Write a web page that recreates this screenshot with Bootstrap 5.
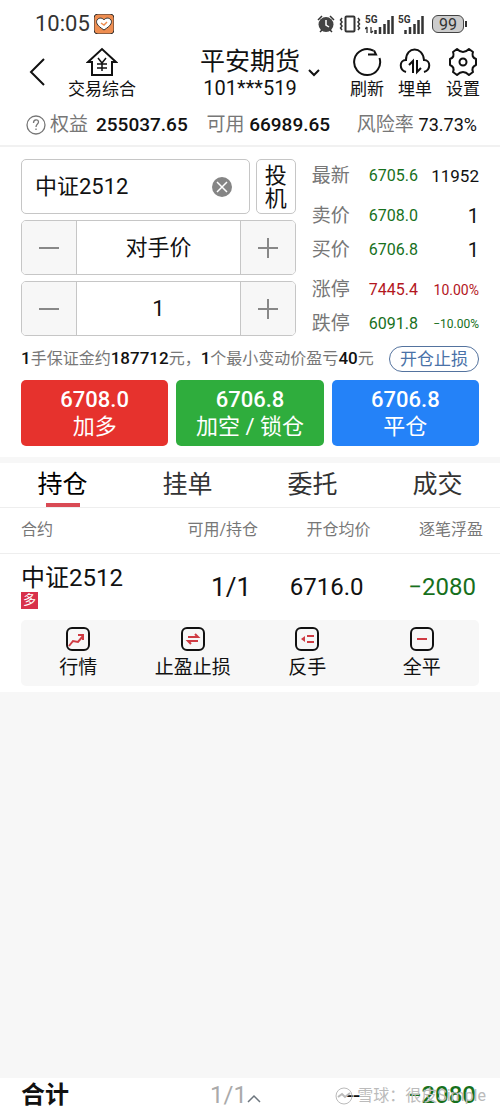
<!DOCTYPE html>
<html lang="zh-CN">
<head>
<meta charset="utf-8">
<meta name="viewport" content="width=device-width, initial-scale=1">
<title>交易综合</title>
<link rel="stylesheet" href="https://cdn.jsdelivr.net/npm/bootstrap@5.3.0/dist/css/bootstrap.min.css">
<style>
:root{--ink:#111;--muted-ink:#777;--up:#b3161d;--down:#17701c;--line:#c6c6c6;--soft:#f7f7f7}
body{font-family:Roboto,"Noto Sans CJK SC",sans-serif;color:var(--ink);background:var(--soft);font-size:16px;line-height:24px}
svg{display:block;flex:none;fill:none;stroke:currentColor}
button{color:inherit}
.gutter{padding-left:21px;padding-right:21px}
.tap{border:0;background:none;padding:0}
.statusbar{height:44px;padding:4px 32px 0 35px;color:#333}
.clock{font-size:22px}
.net{font-size:10px;line-height:10px;font-weight:700}
.batt{width:32px;height:18px;border:1px solid #444;border-radius:6px;background:#ccc;font-size:16px;line-height:17px;text-align:center}
.apphead{height:60px;padding:3px 20px 0 28px}
.tool{font-size:17px;line-height:20px;gap:2px}
.tools{gap:14px}
.home-btn{margin-left:22px}
.broker-btn{margin-left:34px}
.broker{font-size:25px;line-height:30px}
.acct-no{font-size:20px;line-height:22px}
.funds{height:43px;padding:0 23px 0 26px;font-size:19px;border-bottom:2px solid #f1f1f1}
.funds-val{font-weight:500}
.dim{color:var(--muted-ink)}
.risk{font-size:18px}
.ticket{padding-top:12px;gap:16px}
.fields{gap:6px;flex:0 0 60%;min-width:0}
.fields-top{gap:6px}
.box{height:55px;border:1px solid var(--line);border-radius:5px;overflow:hidden;background:#fff;font-size:22px}
.symbol-box{padding:0 17px 0 13px}
.box input{border:0;outline:0;min-width:0;background:none;color:inherit}
.step{width:54px;flex:none;background:var(--soft);color:#888}
.box .mid{border-left:1px solid var(--line);border-right:1px solid var(--line)}
.kind{width:40px;line-height:23px}
.quotes{font-size:16px;margin:0;table-layout:fixed}
.quotes th{width:57px;font-size:19px;font-weight:400;color:var(--muted-ink)}
.quotes th,.quotes td{padding:0;height:34px;white-space:nowrap}
.quotes td.num{width:52px}
.quotes .tall th,.quotes .tall td{padding-top:6px;height:40px}
.quotes .qty{font-size:20px}
.quotes .qty-s{font-size:17px}
.pct{font-size:14px}
.pct-s{font-size:12px}
.up{color:var(--up)}.down{color:var(--down)}
.note{height:39px;padding-bottom:4px}
.note b{color:var(--ink);font-size:17px;font-weight:500}
.pill{border:1px solid #54739e;border-radius:13px;height:26px;line-height:22px;font-size:17px;padding:0 10px;color:#4a72a8;background:#fff}
.orders{gap:8px;padding-bottom:11px}
.order{height:66px;border:0;border-radius:5px;color:#fff;font-size:22px;line-height:27px}
.order strong{display:block;font-size:22px;font-weight:500}
.buy{background:#e6322d}.sell{background:#2fad3d}.close-pos{background:#2482f8}
.band{height:6px;background:var(--soft)}
.tabs{height:45px;border-bottom:1px solid #eee}
.tabs a{font-size:25px;line-height:44px;color:#333;text-decoration:none;position:relative}
.tabs a.active::after{content:"";position:absolute;left:50%;bottom:0;width:34px;height:4px;margin-left:-17px;background:#d94a54}
.pos{table-layout:fixed;width:100%;margin:0}
.pos th{font-weight:400;color:var(--muted-ink);height:45px;padding:0 17px 0 0;border-bottom:1px solid #eee}
.pos td{font-size:24px;line-height:28px;height:67px;padding:0 24px 0 0}
.pos td.lots{font-size:26px}
.pos th:first-child,.pos td:first-child{padding:0 0 0 21px}
.side{display:block;width:17px;height:17px;background:#d8304a;color:#fff;font-size:13px;line-height:16px;text-align:center}
.actions-wrap{padding-bottom:6px}
.actions{background:var(--soft);border-radius:5px;height:66px}
.act{font-size:19px;line-height:26px;gap:3px}
.foot{height:33px;font-size:24px;line-height:34px;overflow:hidden}
.foot-name{width:42%}
.foot-lots{color:#aaa}
.foot-pl{padding-right:24px;font-weight:500}
.stamp{position:absolute;right:14px;top:6px;font-size:16px;line-height:24px;color:#bbb}
</style>
</head>
<body>
<div class="d-flex flex-column min-vh-100">
<div class="bg-white">
  <div class="statusbar d-flex align-items-center justify-content-between">
    <div class="d-flex align-items-center gap-1"><span class="clock">10:05</span>
      <svg width="20" height="20" viewBox="0 0 20 20" stroke="none"><rect width="20" height="20" rx="4" fill="#ee8d50"/><path d="M10 16C2 11 2 8 3 6c2-3 6-2 7 0 1-2 5-3 7 0 1 2 1 5-7 10z" fill="#fff"/><path d="M7 9l3 2 3-3" fill="none" stroke="#ee8d50" stroke-width="1.5"/></svg>
    </div>
    <div class="d-flex align-items-center">
      <svg width="18" height="18" viewBox="0 0 18 18"><circle cx="9" cy="9.500" r="7.500" fill="#444" stroke="none"/><path d="M1 5l4-4M17 5l-4-4M3 17l2-2M15 17l-2-2" stroke-width="1.500"/><path d="M9 5v5l3 2" stroke="#fff" stroke-width="1.500"/></svg>
      <svg class="ms-1 me-1" width="22" height="18" viewBox="0 0 22 18" stroke-width="1.500"><rect x="6.500" y="1.500" width="9" height="15" rx="1" stroke-width="2"/><path d="M3 3L1.500 5 3 7 1.500 9 3 11 1.500 13 3 15M19 3l1.500 2L19 7l1.500 2-1.500 2 1.500 2-1.500 2"/></svg>
      <span class="position-relative me-1"><span class="net position-absolute top-0 start-0">5G</span><svg width="29" height="19" viewBox="0 0 29 19" stroke-width="2.500"><path d="M10.500 19v-4M15 19v-7M19.500 19v-10M23.500 19v-14M27.500 19v-18"/><path d="M2 12v6M6 18v-6M0 14l2-2M8 16l-2 2" stroke-width="1.300"/></svg></span>
      <span class="position-relative me-2"><span class="net position-absolute top-0 start-0">5G</span><svg width="26" height="19" viewBox="0 0 26 19" stroke-width="2.500"><path d="M7.500 19v-4M12 19v-7M16.500 19v-10M20.500 19v-14M24.500 19v-18"/></svg></span>
      <span class="batt">99</span><svg width="4" height="8" viewBox="0 0 4 8" stroke-width="2"><path d="M2 1v6"/></svg>
    </div>
  </div>

  <header class="apphead d-flex justify-content-between align-items-start">
    <div class="d-flex align-items-start">
      <button class="tap mt-2" aria-label="返回"><svg width="18" height="32" viewBox="0 0 18 32" stroke-width="2"><path d="M16 4L3 17l13 13"/></svg></button>
      <button class="tap tool home-btn d-flex flex-column align-items-center"><svg width="32" height="30" viewBox="0 0 32 30" stroke-width="2"><path d="M6 15H2L16 2l14 13h-4v13H6z"/><path d="M12 11l4 5 4-5M11 17h10M11 21h10M16 16v8" stroke-width="1.500"/></svg><span>交易综合</span></button>
    </div>
    <button class="tap broker-btn d-flex align-items-center"><span><span class="broker d-block">平安期货</span><span class="acct-no d-block">101***519</span></span><svg class="ms-2" width="12" height="8" viewBox="0 0 12 8" stroke-width="2"><path d="M1 1l5 5 5-5"/></svg></button>
    <div class="d-flex tools">
      <button class="tap tool d-flex flex-column align-items-center"><svg width="30" height="30" viewBox="0 0 30 30" stroke-width="2"><path d="M21.500 3.700A13 13 0 1 0 27.500 11M16 7.500h8l-2-4"/></svg><span>刷新</span></button>
      <button class="tap tool d-flex flex-column align-items-center"><svg width="32" height="30" viewBox="0 0 32 30" stroke-width="2"><path d="M7 25C0 23 0 13 7 13 7 -1 24 -1 25 13c7 0 7 10 0 12"/><path d="M10 18l4-4v12M18 13v12l4-4"/></svg><span>埋单</span></button>
      <button class="tap tool d-flex flex-column align-items-center"><svg width="30" height="30" viewBox="0 0 30 30" stroke-width="2" stroke-linejoin="round"><path d="M9 2q3 3 6 3t6-3l4 3q-2 5 3 7v6q-5 2-3 7l-4 3q-3-3-6-3t-6 3l-4-3q2-5-3-7v-6q5-2 3-7z"/><circle cx="15" cy="15" r="3.500"/></svg><span>设置</span></button>
    </div>
  </header>

  <div class="funds d-flex align-items-center justify-content-between">
    <span class="d-flex align-items-center"><svg class="dim" width="20" height="20" viewBox="0 0 20 20" stroke-width="1.300"><circle cx="10" cy="10" r="9"/><path d="M7.500 8c0-4 5-4 5-1 0 2-2.500 2-2.500 5M10 13.500v1.500"/></svg><span class="dim ms-1 me-2">权益</span><span class="funds-val">255037.65</span></span>
    <span><span class="dim">可用</span> <span class="funds-val">66989.65</span></span>
    <span class="ms-2"><span class="dim">风险率</span> <span class="risk">73.73%</span></span>
  </div>

  <main>
    <div class="ticket gutter d-flex">
      <div class="fields d-flex flex-column">
        <div class="fields-top d-flex">
          <div class="box symbol-box flex-grow-1 d-flex align-items-center"><input class="w-100 p-0" aria-label="合约" value="中证2512"><button class="tap" aria-label="清除"><svg width="20" height="20" viewBox="0 0 20 20"><circle cx="10" cy="10" r="10" fill="#858585" stroke="none"/><path d="M5 5l10 10M15 5L5 15" stroke="#fff" stroke-width="1.500"/></svg></button></div>
          <button class="box kind p-0 flex-shrink-0">投<br>机</button>
        </div>
        <div class="box d-flex"><button class="tap step d-flex align-items-center justify-content-center" aria-label="减价"><svg width="20" height="20" viewBox="0 0 20 20" stroke-width="2"><path d="M0 10h20"/></svg></button><input class="mid w-100 text-center" aria-label="价格" value="对手价"><button class="tap step d-flex align-items-center justify-content-center" aria-label="加价"><svg width="20" height="20" viewBox="0 0 20 20" stroke-width="2"><path d="M0 10h20M10 0v20"/></svg></button></div>
        <div class="box d-flex"><button class="tap step d-flex align-items-center justify-content-center" aria-label="减少"><svg width="20" height="20" viewBox="0 0 20 20" stroke-width="2"><path d="M0 10h20"/></svg></button><input class="mid w-100 text-center" aria-label="手数" value="1"><button class="tap step d-flex align-items-center justify-content-center" aria-label="增加"><svg width="20" height="20" viewBox="0 0 20 20" stroke-width="2"><path d="M0 10h20M10 0v20"/></svg></button></div>
      </div>
      <div class="flex-grow-1">
        <table class="quotes w-100">
          <tr><th>最新</th><td class="num down">6705.6</td><td class="qty-s text-end">11952</td></tr>
          <tr class="tall"><th>卖价</th><td class="down">6708.0</td><td class="qty text-end">1</td></tr>
          <tr><th>买价</th><td class="down">6706.8</td><td class="qty text-end">1</td></tr>
          <tr class="tall"><th>涨停</th><td class="up">7445.4</td><td class="pct up text-end">10.00%</td></tr>
          <tr><th>跌停</th><td class="down">6091.8</td><td class="pct-s down text-end">−10.00%</td></tr>
        </table>
      </div>
    </div>

    <div class="note gutter d-flex align-items-center justify-content-between text-nowrap">
      <span class="dim"><b>1</b>手保证金约<b>187712</b>元，<b>1</b>个最小变动价盈亏<b>40</b>元</span><button class="pill">开仓止损</button>
    </div>

    <div class="orders gutter d-flex">
      <button class="order buy w-100 p-0"><strong>6708.0</strong>加多</button>
      <button class="order sell w-100 p-0"><strong>6706.8</strong>加空 / 锁仓</button>
      <button class="order close-pos w-100 p-0"><strong>6706.8</strong>平仓</button>
    </div>
    <div class="band"></div>

    <nav class="tabs d-flex text-center">
      <a href="#" class="active w-100 text-black">持仓</a><a href="#" class="w-100">挂单</a><a href="#" class="w-100">委托</a><a href="#" class="w-100">成交</a>
    </nav>

    <table class="pos">
      <colgroup><col style="width:32%"><col style="width:23%"><col><col></colgroup>
      <thead><tr><th>合约</th><th class="text-end">可用/持仓</th><th class="text-end">开仓均价</th><th class="text-end">逐笔浮盈</th></tr></thead>
      <tbody><tr><td>中证2512<span class="side">多</span></td><td class="lots text-end">1/1</td><td class="text-end">6716.0</td><td class="text-end down">−2080</td></tr></tbody>
    </table>

    <div class="actions-wrap gutter">
      <div class="actions d-flex align-items-center">
        <button class="tap act w-100 d-flex flex-column align-items-center"><svg width="26" height="26" viewBox="0 0 26 26" stroke-width="2"><rect x="2" y="2" width="22" height="22" rx="5"/><path d="M4 20l4-5 5 1 5-6M13 9h5v5" stroke="#cf3b43"/></svg>行情</button>
        <button class="tap act w-100 d-flex flex-column align-items-center"><svg width="26" height="26" viewBox="0 0 26 26" stroke-width="2"><rect x="2" y="2" width="22" height="22" rx="5"/><path d="M8 11h10l-3-3M18 15H8l3 3" stroke="#cf3b43"/></svg>止盈止损</button>
        <button class="tap act w-100 d-flex flex-column align-items-center"><svg width="26" height="26" viewBox="0 0 26 26" stroke-width="2"><rect x="2" y="2" width="22" height="22" rx="5"/><path d="M13 10h7M13 16h7" stroke="#cf3b43"/><path d="M11 10v6l-4-3z" fill="#cf3b43" stroke="none"/></svg>反手</button>
        <button class="tap act w-100 d-flex flex-column align-items-center"><svg width="26" height="26" viewBox="0 0 26 26" stroke-width="2"><rect x="2" y="2" width="22" height="22" rx="5"/><path d="M8 13h10" stroke="#cf3b43"/></svg>全平</button>
      </div>
    </div>
  </main>
</div>

<footer class="foot bg-white mt-auto position-relative d-flex">
  <b class="foot-name gutter">合计</b>
  <span class="foot-lots d-flex align-items-center">1/1<svg class="text-secondary mt-2" width="14" height="9" viewBox="0 0 14 9" stroke-width="1.500"><path d="M1 8l6-6 6 6"/></svg></span>
  <span class="ms-auto pe-5">--</span>
  <span class="down foot-pl">−2080</span>
  <span class="stamp d-flex align-items-center gap-1"><svg width="18" height="18" viewBox="0 0 18 18"><circle cx="9" cy="9" r="8"/><path d="M3 10l4-3 3 3 5-4" stroke-width="2"/></svg>雪球：很皮Simple</span>
</footer>
</div>
<script src="https://cdn.jsdelivr.net/npm/bootstrap@5.3.0/dist/js/bootstrap.bundle.min.js"></script>
</body>
</html>
